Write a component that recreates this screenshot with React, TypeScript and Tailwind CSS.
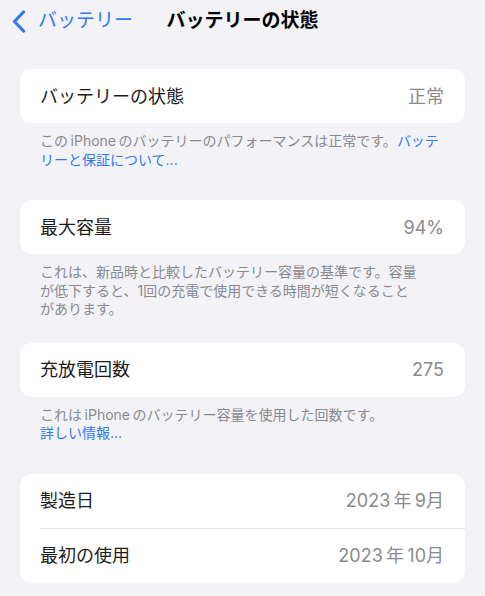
import React from "react";

const font = { fontFamily: '"Inter", "Noto Sans CJK JP", sans-serif' };

function Row({ label, value }: { label: string; value: string }) {
  return (
    <div className="flex h-[54px] items-center justify-between pl-[20px] pr-[21px]">
      <span className="text-[18px] text-[#1c1c1e]">{label}</span>
      <span className="text-[18px] text-[#8a8a8e]">{value}</span>
    </div>
  );
}

function Card({ children, className = "" }: { children: React.ReactNode; className?: string }) {
  return <div className={`rounded-[12px] bg-white ${className}`}>{children}</div>;
}

function Footer({ children }: { children: React.ReactNode }) {
  return (
    <div className="pl-[20px] pr-[16px] pt-[9px] text-[14px] leading-[18.5px] text-[#8a8a8e] whitespace-nowrap">
      {children}
    </div>
  );
}

export default function App() {
  return (
    <div className="min-h-[596px] w-full bg-[#f2f2f7] pb-[13px]" style={font}>
      <div className="grid h-[42px] grid-cols-[1fr_auto_1fr] items-center">
        <div className="flex items-center gap-[12px] pl-[12px] text-[#3478f6]">
          <svg width="14" height="23" viewBox="0 0 14 23" fill="none">
            <path
              d="M11.5 2 L2.5 11.5 L11.5 21"
              stroke="currentColor"
              strokeWidth="3.2"
              strokeLinecap="round"
              strokeLinejoin="round"
            />
          </svg>
          <span className="text-[19px]">バッテリー</span>
        </div>
        <div className="text-[19px] font-bold text-black">バッテリーの状態</div>
        <div />
      </div>

      <div className="px-[20px]">
        <Card className="mt-[27px]">
          <Row label="バッテリーの状態" value="正常" />
        </Card>
        <Footer>
          <div>
            この{"\u2009"}iPhone{"\u2009"}のバッテリーのパフォーマンスは正常です。
            <span className="text-[#3478f6]">バッテ</span>
          </div>
          <div className="text-[#3478f6]">リーと保証について...</div>
        </Footer>

        <Card className="mt-[31px]">
          <Row label="最大容量" value="94%" />
        </Card>
        <Footer>
          <div>これは、新品時と比較したバッテリー容量の基準です。容量</div>
          <div>が低下すると、1回の充電で使用できる時間が短くなること</div>
          <div>があります。</div>
        </Footer>

        <Card className="mt-[24px]">
          <Row label="充放電回数" value="275" />
        </Card>
        <Footer>
          <div>これは{"\u2009"}iPhone{"\u2009"}のバッテリー容量を使用した回数です。</div>
          <div className="text-[#3478f6]">詳しい情報...</div>
        </Footer>

        <Card className="mt-[31px]">
          <Row label="製造日" value={"2023\u2009年\u20099月"} />
          <div className="ml-[20px] h-px bg-[#e2e2e7]" />
          <Row label="最初の使用" value={"2023\u2009年\u200910月"} />
        </Card>
      </div>
    </div>
  );
}
